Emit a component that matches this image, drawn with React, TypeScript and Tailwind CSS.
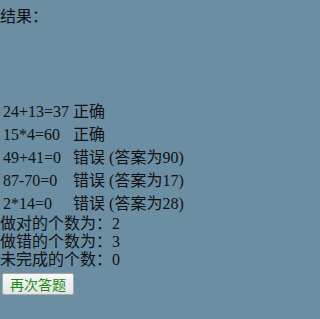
const rows: [string, string][] = [
  ["24+13=37", "正确"],
  ["15*4=60", "正确"],
  ["49+41=0", "错误 (答案为90)"],
  ["87-70=0", "错误 (答案为17)"],
  ["2*14=0", "错误 (答案为28)"],
];

export default function App() {
  return (
    <div
      className="min-h-[319px] w-full bg-[#6b8ea3] text-[16px] text-[#111]"
      style={{ fontFamily: '"Liberation Serif", "Noto Sans CJK SC", serif' }}
    >
      <div className="pt-[8px] leading-[18px]">结果：</div>

      {/* results table */}
      <table className="mt-[73px] border-separate border-spacing-[2px]">
        <tbody>
          {rows.map(([q, r]) => (
            <tr key={q}>
              <td className="p-[1px] leading-[19px] whitespace-nowrap">{q}</td>
              <td className="p-[1px] leading-[19px] whitespace-nowrap">{r}</td>
            </tr>
          ))}
        </tbody>
      </table>

      <div className="-mt-[1px] leading-[18px]">
        <div>做对的个数为：2</div>
        <div>做错的个数为：3</div>
        <div>未完成的个数：0</div>
      </div>

      <button
        type="button"
        className="ml-[2px] mt-[4px] flex h-[22px] w-[72px] items-center justify-center rounded-[2px] border border-[#a9a9a9] bg-gradient-to-b from-[#f8f8f8] to-[#e4e4e4] text-[14px] leading-none text-[#1a8a1a]"
        style={{ fontFamily: '"Noto Sans CJK SC", sans-serif' }}
      >
        再次答题
      </button>
    </div>
  );
}
